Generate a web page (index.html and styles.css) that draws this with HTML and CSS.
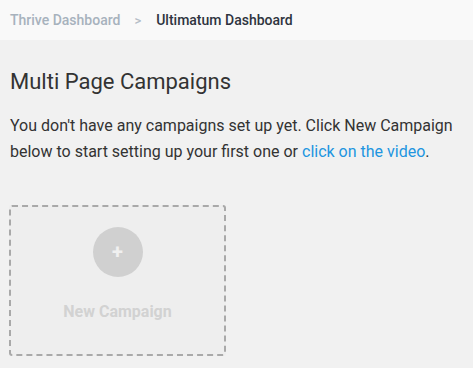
FILE: index.html
```html
<!DOCTYPE html>
<html lang="en">
<head>
  <meta charset="UTF-8" />
  <title>Ultimatum Dashboard</title>
  <link rel="stylesheet" href="styles.css">
</head>
<body>
  <div class="breadcrumbs">
    <a href="#" class="crumb">Thrive Dashboard</a>
    <span class="sep">&gt;</span>
    <span class="crumb current">Ultimatum Dashboard</span>
  </div>

  <div class="content">
    <h1>Multi Page Campaigns</h1>
    <p class="intro">You don't have any campaigns set up yet. Click New Campaign below to start setting up your first one or <a href="#">click on the video</a>.</p>

    <a href="#" class="new-campaign">
      <span class="plus">+</span>
      <span class="label">New Campaign</span>
    </a>
  </div>
</body>
</html>
```

FILE: styles.css
```css
body { margin: 0; background: #f1f1f1; font-family: Roboto, "Liberation Sans", sans-serif; color: #333; }
.breadcrumbs { height: 40px; background: #f9f9f9; display: flex; align-items: center; padding: 0 10px; font-size: 14px; font-weight: 500; }
.crumb { color: #a7b2bd; text-decoration: none; }
.crumb.current { color: #2e3440; }
.sep { color: #b5bec7; margin: 0 15px 0 14px; font-size: 13px; }
.content { padding: 0 10px; }
h1 { font-size: 22px; font-weight: 400; margin: 27px 0 0; line-height: 30px; color: #333; }
.intro { font-size: 16px; line-height: 26px; margin: 16px 0 0; color: #333; }
.intro a { color: #2195e0; text-decoration: none; }
.new-campaign { display: flex; flex-direction: column; align-items: center; box-sizing: border-box; width: 217px; height: 151px; margin: 40px 0 0 -1px; border: 2px dashed #a9a9a9; border-radius: 3px; background: #eeeeee; text-decoration: none; }
.plus { width: 50px; height: 50px; border-radius: 50%; background: #d0d0d0; color: #f0f0f0; font-size: 20px; font-weight: 700; display: flex; align-items: center; justify-content: center; margin-top: 20px; }
.label { margin-top: 25px; font-size: 16px; font-weight: 700; color: #d2d2d2; }
```
